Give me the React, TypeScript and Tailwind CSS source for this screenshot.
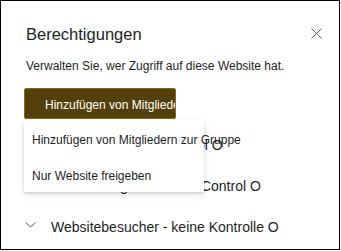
import React from "react";

const font = { fontFamily: '"Liberation Sans", Arial, sans-serif' };

function Chevron() {
  return (
    <svg width="11" height="6" viewBox="0 0 11 6" className="mt-[5px] -ml-[1px] shrink-0">
      <path d="M0.5 0.5 L5.5 5 L10.5 0.5" fill="none" stroke="#605e5c" strokeWidth="1" />
    </svg>
  );
}

function Row({ text }: { text: string }) {
  return (
    <div className="flex items-start h-[41px]">
      <Chevron />
      <span className="ml-[15px] text-[14px] leading-[20px] text-[#201f1e] whitespace-nowrap">{text}</span>
    </div>
  );
}

export default function App() {
  return (
    <div
      className="relative w-[340px] h-[250px] border border-black bg-white overflow-hidden"
      style={font}
    >
      <div className="flex flex-col pl-[25px] pr-[17px] pt-[23px]">
        <div className="flex justify-between items-start">
          <span className="text-[16.5px] leading-[20px] text-[#201f1e]">Berechtigungen</span>
          <svg width="11" height="11" viewBox="0 0 11 11" className="mt-[4px]">
            <path d="M0.5 0.5 L10.5 10.5 M10.5 0.5 L0.5 10.5" stroke="#605e5c" strokeWidth="1" fill="none" />
          </svg>
        </div>
        <p className="mt-[14px] text-[12px] leading-[16px] text-[#201f1e] whitespace-nowrap">
          Verwalten Sie, wer Zugriff auf diese Website hat.
        </p>
        <div className="mt-[14px] -ml-[2px] w-[152px] h-[31px] bg-[#54400a] border border-[#8a6a16] rounded-[2px] overflow-hidden pl-[20px] pt-[8px]">
          <span className="block text-[12px] leading-[16px] text-white whitespace-nowrap">
            Hinzufügen von Mitgliedern
          </span>
        </div>
        <div className="mt-[16px] flex flex-col">
          <Row text="Websitebesitzer - Control O" />
          <Row text="Websitemitglieder - Full Control O" />
          <Row text="Websitebesucher - keine Kontrolle O" />
        </div>
      </div>
      <div className="absolute left-[23px] top-[119px] w-[180px] h-[72px] bg-white shadow-[0_3px_7px_rgba(0,0,0,0.13),0_0.6px_1.8px_rgba(0,0,0,0.11)] flex flex-col">
        <div className="h-[36px] pt-[12px] pl-[8px] text-[12px] leading-[16px] text-[#201f1e] whitespace-nowrap">
          Hinzufügen von Mitgliedern zur Gruppe
        </div>
        <div className="h-[36px] pt-[12px] pl-[8px] text-[12px] leading-[16px] text-[#201f1e] whitespace-nowrap">
          Nur Website freigeben
        </div>
      </div>
    </div>
  );
}
